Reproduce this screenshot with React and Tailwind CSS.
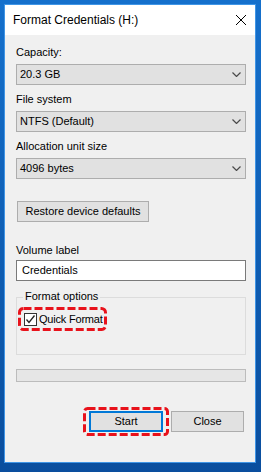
const font = { fontFamily: '"Liberation Sans", Arial, sans-serif' };

function Chevron() {
  return (
    <svg width="9" height="5" viewBox="0 0 9 5" className="shrink-0">
      <path d="M0.5 0.5 L4.5 4.5 L8.5 0.5" fill="none" stroke="#4a4a4a" strokeWidth="1.2" />
    </svg>
  );
}

// red dashed highlight drawn over a wrapper
function Dashed({ w, h, r = 4 }) {
  return (
    <svg width={w} height={h} className="pointer-events-none absolute left-0 top-0">
      <rect
        x="1.5"
        y="1.5"
        width={w - 3}
        height={h - 3}
        rx={r}
        fill="none"
        stroke="#e8121b"
        strokeWidth="3"
        strokeDasharray="8 3"
      />
    </svg>
  );
}

function Select({ value }) {
  return (
    <div className="mt-[4px] flex h-[21px] w-[230px] items-center justify-between border border-[#adadad] bg-[#e1e1e1] pl-[3px] pr-[4px] text-[11px] leading-none text-black">
      <span>{value}</span>
      <Chevron />
    </div>
  );
}

function Label({ children, className = "" }) {
  return <div className={`h-[15px] whitespace-nowrap text-[11px] leading-[15px] text-black ${className}`}>{children}</div>;
}

export default function App() {
  return (
    <div
      className="h-[472px] w-[261px] overflow-hidden bg-gradient-to-b from-[#1570cc] to-[#0a4e9e] pl-[4px] pt-[4px]"
      style={font}
    >
      <div className="flex h-[459px] w-[252px] flex-col border border-[#3f95e6] bg-[#f0f0f0]">
        {/* title bar */}
        <div className="flex h-[30px] items-center justify-between bg-white pl-[8px] pr-[9px]">
          <span className="text-[12px] text-black">Format Credentials (H:)</span>
          <svg width="10" height="10" viewBox="0 0 10 10">
            <path d="M0 0 L10 10 M10 0 L0 10" stroke="#000" strokeWidth="1" />
          </svg>
        </div>

        <div className="flex flex-col pl-[11px] pr-[9px]">
          <Label className="mt-[10px]">Capacity:</Label>
          <Select value="20.3 GB" />

          <Label className="mt-[7px]">File system</Label>
          <Select value="NTFS (Default)" />

          <Label className="mt-[7px]">Allocation unit size</Label>
          <Select value="4096 bytes" />

          <button className="ml-[1px] mt-[22px] flex h-[21px] w-[132px] items-center justify-center whitespace-nowrap border border-[#adadad] bg-[#e1e1e1] text-[11px] leading-none text-black">
            Restore device defaults
          </button>

          <Label className="mt-[21px]">Volume label</Label>
          <div className="mt-[2px] flex h-[21px] w-[230px] items-center border border-[#7a7a7a] bg-white pl-[5px] text-[11px] leading-none text-black">
            Credentials
          </div>

          {/* format options group */}
          <div className="relative mt-[16px] h-[58px] w-[230px] border border-[#dcdcdc] pl-[1px] pt-[9px]">
            <span className="absolute left-[6px] top-[-9px] whitespace-nowrap bg-[#f0f0f0] px-[2px] text-[11px] leading-[15px] text-black">
              Format options
            </span>
            <div className="relative flex h-[24px] w-[89px] items-center gap-[2px] pl-[6px]">
              <Dashed w={89} h={24} />
              <span className="flex h-[13px] w-[13px] shrink-0 items-center justify-center border border-[#333] bg-white">
                <svg width="11" height="11" viewBox="0 0 11 11">
                  <path d="M1.5 5.5 L4 8.5 L9.5 1.5" fill="none" stroke="#222" strokeWidth="1.3" />
                </svg>
              </span>
              <span className="whitespace-nowrap text-[11px] leading-none tracking-[-0.2px] text-black">Quick Format</span>
            </div>
          </div>

          <div className="mt-[14px] h-[13px] w-[230px] border border-[#bcbcbc] bg-[#e6e6e6]" />

          <div className="mt-[25px] flex justify-end gap-[2px] pr-[2px]">
            <div className="relative flex h-[29px] w-[86px] items-center justify-center">
              <Dashed w={86} h={29} r={3} />
              <button className="flex h-[21px] w-[74px] items-center justify-center border-2 border-[#0078d7] bg-[#e1e1e1] text-[11px] leading-none text-black">
                Start
              </button>
            </div>
            <button className="mt-[4px] flex h-[21px] w-[73px] items-center justify-center border border-[#adadad] bg-[#e1e1e1] text-[11px] leading-none text-black">
              Close
            </button>
          </div>
        </div>
      </div>
    </div>
  );
}
